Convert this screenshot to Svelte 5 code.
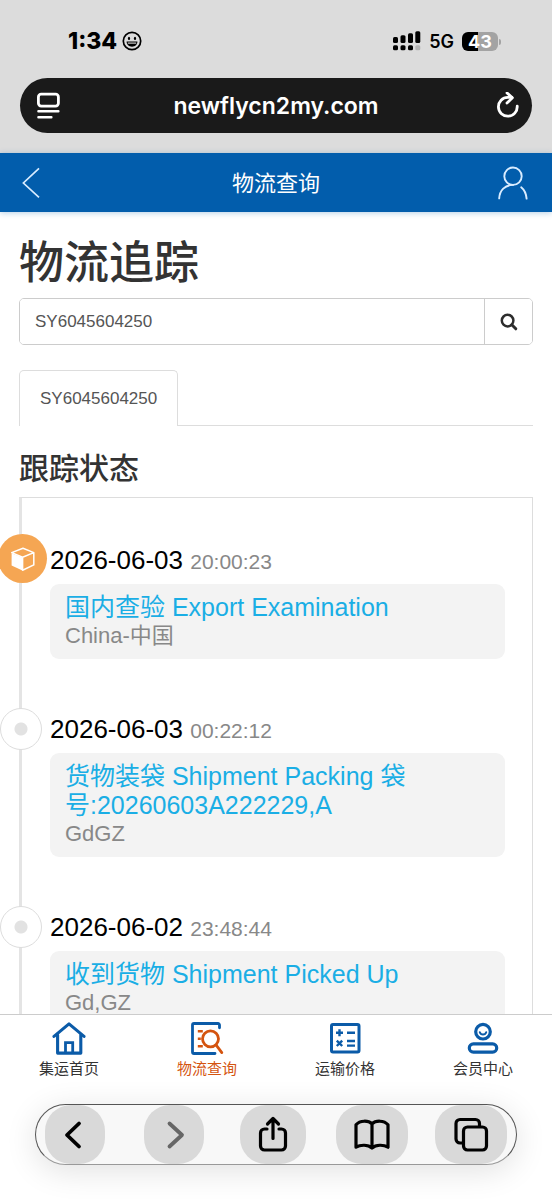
<script>
  let query = $state('SY6045604250');

  const events = [
    { date: '2026-06-03', time: '20:00:23', title: '国内查验 Export Examination', place: 'China-中国' },
    { date: '2026-06-03', time: '00:22:12', title: '货物装袋 Shipment Packing 袋号:20260603A222229,A', place: 'GdGZ' },
    { date: '2026-06-02', time: '23:48:44', title: '收到货物 Shipment Picked Up', place: 'Gd,GZ' }
  ];
</script>

<div class="screen">
  <div class="browser-top">
    <div class="status">
      <div class="clock">
        <span>1:34</span>
        <svg width="20" height="20" viewBox="0 0 20 20" fill="none" stroke="#000" aria-hidden="true">
          <circle cx="10" cy="10" r="8.7" stroke-width="1.7" />
          <ellipse cx="7" cy="7.4" rx="1.1" ry="1.6" fill="#000" stroke="none" />
          <ellipse cx="13" cy="7.4" rx="1.1" ry="1.6" fill="#000" stroke="none" />
          <path d="M4.6 10.6h10.8c0 3.2-2.4 5.2-5.4 5.2s-5.4-2-5.4-5.2z" fill="#000" stroke="none" />
          <path d="M5.8 12.1h8.4" stroke="#ddd" stroke-width="1.1" />
        </svg>
      </div>
      <div class="signals">
        <svg width="29" height="20" viewBox="0 0 29 20" aria-hidden="true">
          <rect x="1" y="6" width="5" height="6" rx="1.5" />
          <rect x="8.5" y="4.3" width="5" height="7.7" rx="1.5" />
          <rect x="16" y="2.3" width="5" height="9.7" rx="1.5" />
          <rect x="23.3" y="0.3" width="5" height="11.7" rx="1.5" />
          <rect x="1" y="14.3" width="5" height="5" rx="1.5" />
          <rect x="8.5" y="14.3" width="5" height="5" rx="1.5" />
          <rect x="16" y="14.3" width="5" height="5" rx="1.5" />
          <rect x="23.3" y="14.3" width="5" height="5" rx="1.5" fill="#b5b5b5" />
        </svg>
        <span class="network">5G</span>
        <span class="battery">43</span>
      </div>
    </div>
    <div class="address">
      <button class="plain" aria-label="Page menu">
        <svg width="28" height="28" viewBox="0 0 28 28" fill="none" stroke="#fff" stroke-width="2.8" stroke-linecap="round" aria-hidden="true">
          <rect x="4.4" y="2.1" width="20" height="12" rx="2.8" />
          <path d="M4.4 19.3h20M4.4 25.2h13" stroke-width="2.4" />
        </svg>
      </button>
      <span class="host">newflycn2my.com</span>
      <button class="plain" aria-label="Reload">
        <svg width="28" height="28" viewBox="0 0 28 28" fill="none" stroke="#fff" stroke-width="2.8" stroke-linecap="round" stroke-linejoin="round" aria-hidden="true">
          <path d="M23.2 14.2A9.4 9.4 0 1 1 13.8 5.4h4" />
          <path d="M13 0.9l5.4 4.9-5.4 5.3" />
        </svg>
      </button>
    </div>
  </div>

  <header>
    <a href="#back" class="back" aria-label="返回">
      <svg width="34" height="34" viewBox="0 0 34 34" fill="none" stroke="#d9ecff" stroke-width="1.7" aria-hidden="true">
        <path d="M23 2.4L7.4 17 23 31.4" />
      </svg>
    </a>
    <span class="page-name">物流查询</span>
    <a href="#account" aria-label="账户">
      <svg width="34" height="34" viewBox="0 0 34 34" fill="none" stroke="#d9ecff" stroke-width="1.9" stroke-linecap="round" aria-hidden="true">
        <circle cx="17" cy="10.2" r="8.7" />
        <path d="M3.2 32.4C3.6 24.4 9 19 17 18.9M25.2 21.3c3.2 2.6 5 6.6 5.4 11.3" />
      </svg>
    </a>
  </header>

  <main>
    <h1>物流追踪</h1>
    <form class="search" onsubmit={(e) => e.preventDefault()}>
      <input type="text" aria-label="单号" bind:value={query} />
      <button aria-label="搜索">
        <svg width="18" height="18" viewBox="0 0 18 18" fill="none" stroke="#2d2d2d" aria-hidden="true">
          <circle cx="7.6" cy="7.6" r="5.8" stroke-width="2.5" />
          <path d="M11.8 11.8l4 4" stroke-width="3" stroke-linecap="round" />
        </svg>
      </button>
    </form>

    <div class="tabs">
      <a href="#parcel" class="tab">SY6045604250</a>
    </div>

    <h2>跟踪状态</h2>
    <ol class="timeline">
      {#each events as event, i}
        <li>
          {#if i === 0}
            <span class="marker current">
              <svg width="26" height="26" viewBox="0 0 26 26" aria-hidden="true">
                <path d="M1.6 7.3L12.4 11.4V24.4L1.6 19.4z" fill="#fff" />
                <path d="M1.7 6.600L13 2.300l10.800 4.300v12.300L12.600 24.200V11.200zM12.600 11.200L23.800 6.600M1.700 6.600l10.900 4.600" fill="none" stroke="#fff" stroke-width="1.500" stroke-linejoin="round" />
              </svg>
            </span>
          {:else}
            <span class="marker past"></span>
          {/if}
          <div class="when"><time>{event.date}</time> <small>{event.time}</small></div>
          <div class="card">
            <p class="title">{event.title}</p>
            <p class="place">{event.place}</p>
          </div>
        </li>
      {/each}
    </ol>
  </main>

  <div class="bottom">
    <nav>
      <a href="#home">
        <svg width="34" height="34" viewBox="0 0 34 34" fill="none" stroke="#0b5ba8" stroke-width="3.1" stroke-linejoin="round" stroke-linecap="round" aria-hidden="true">
          <path d="M2 15.4L17 2.9l15 12.500" />
          <path d="M5.600 14v18.100h23.200V14" />
          <path d="M13.500 31.500V21.700h7.200v9.800" stroke-linejoin="miter" stroke-width="2.800" />
        </svg>
        集运首页
      </a>
      <a href="#track" class="active">
        <svg width="34" height="34" viewBox="0 0 34 34" fill="none" stroke="#0b5ba8" stroke-width="2.800" stroke-linecap="round" stroke-linejoin="round" aria-hidden="true">
          <path d="M29.500 6.800V4a1.500 1.500 0 0 0-1.500-1.500H4A1.500 1.500 0 0 0 2.500 4v27A1.500 1.500 0 0 0 4 32.500h21" />
          <g stroke="#d4540f">
            <circle cx="20.500" cy="17.800" r="8" />
            <path d="M26.200 24.200l5.600 7.400" />
            <path d="M7.800 10.300h5M7.800 17.800h3M7.800 25.300h5" stroke-width="2.400" stroke-linecap="butt" />
          </g>
        </svg>
        物流查询
      </a>
      <a href="#price">
        <svg width="34" height="34" viewBox="0 0 34 34" fill="none" stroke="#0b5ba8" stroke-width="3" aria-hidden="true">
          <rect x="3.500" y="3.500" width="27.500" height="27.500" rx="1.500" />
          <path d="M8 11.800h7M11.500 8.300v7M19 11.800h8M19 20h8M19 24.600h8M8.800 19.600l5.400 5.400M14.200 19.600l-5.400 5.400" stroke-width="2.400" />
        </svg>
        运输价格
      </a>
      <a href="#member">
        <svg width="34" height="34" viewBox="0 0 34 34" fill="none" stroke="#0b5ba8" stroke-width="3.200" stroke-linecap="round" aria-hidden="true">
          <circle cx="17" cy="10.700" r="7.300" />
          <path d="M13.800 11.300c1 3 5.400 3 6.400 0" stroke-width="2" />
          <rect x="3.300" y="22.900" width="27.400" height="8.200" rx="4.100" />
        </svg>
        会员中心
      </a>
    </nav>

    <div class="toolbar">
      <span><button aria-label="Back">
        <svg width="40" height="40" viewBox="0 0 40 40" fill="none" stroke="#000" stroke-width="3.800" stroke-linecap="round" stroke-linejoin="round" aria-hidden="true"><path d="M24 8.500L12 20l12 11.500" /></svg>
      </button></span>
      <span><button aria-label="Forward">
        <svg width="40" height="40" viewBox="0 0 40 40" fill="none" stroke="#666" stroke-width="3.800" stroke-linecap="round" stroke-linejoin="round" aria-hidden="true"><path d="M15.500 8.500L28 20 15.500 31.500" /></svg>
      </button></span>
      <span><button class="mid" aria-label="Share">
        <svg width="40" height="40" viewBox="0 0 40 40" fill="none" stroke="#000" stroke-width="3.200" stroke-linecap="round" stroke-linejoin="round" aria-hidden="true">
          <path d="M14 14h-2.500a4 4 0 0 0-4 4V31a4 4 0 0 0 4 4h17a4 4 0 0 0 4-4V18a4 4 0 0 0-4-4H26M20 23.500V4M14.500 9L20 3.500 25.500 9" />
        </svg>
      </button></span>
      <span><button class="wide" aria-label="Bookmarks">
        <svg width="40" height="40" viewBox="0 0 40 40" fill="none" stroke="#000" stroke-width="3.200" stroke-linecap="round" stroke-linejoin="round" aria-hidden="true">
          <path d="M20 8.800C16.500 5.400 8 5 4 9.800V32.200c4.500-2.700 12-2.700 16 .8 4-3.500 11.500-3.500 16-.8V9.800C32 5 23.500 5.400 20 8.800zM20 9v23.500" />
        </svg>
      </button></span>
      <span><button class="wide" aria-label="Tabs">
        <svg width="40" height="40" viewBox="0 0 40 40" fill="none" stroke="#000" stroke-width="3.200" stroke-linejoin="round" aria-hidden="true">
          <path d="M12 28H9a4 4 0 0 1-4-4V8.500a4 4 0 0 1 4-4h15.500a4 4 0 0 1 4 4V12" />
          <rect x="12.500" y="12" width="23" height="23" rx="4" />
        </svg>
      </button></span>
    </div>
  </div>
</div>

<style>
  :global(body) {
    background: #fff;
  }
  .screen,
  .screen * {
    box-sizing: border-box;
  }
  .screen {
    height: 100vh;
    display: flex;
    flex-direction: column;
    overflow: hidden;
    font-family: "Liberation Sans", "Noto Sans CJK SC", sans-serif;
    color: #333;
  }
  svg {
    display: block;
    flex: none;
  }
  a {
    color: inherit;
    text-decoration: none;
  }
  button {
    border: 0;
    padding: 0;
    font: inherit;
  }

  .browser-top {
    flex: none;
    background: #dcdcdc;
    padding: 26px 20px 20px;
    font-family: Inter, sans-serif;
  }
  .status {
    height: 30px;
    display: flex;
    align-items: center;
    justify-content: space-between;
    padding: 0 34px 0 48px;
    color: #000;
  }
  .clock {
    display: flex;
    align-items: center;
    gap: 5px;
    font-size: 23px;
    font-weight: 800;
  }
  .signals {
    display: flex;
    align-items: center;
    gap: 8px;
  }
  .network {
    font-size: 18px;
    font-weight: 600;
  }
  .battery {
    position: relative;
    width: 36px;
    height: 19px;
    border-radius: 6px;
    background: linear-gradient(90deg, #000 44%, #a3a3a3 44%);
    color: #fff;
    font-size: 18px;
    font-weight: 700;
    line-height: 19px;
    text-align: center;
  }
  .battery::after {
    content: "";
    position: absolute;
    right: -3px;
    top: 7px;
    width: 2px;
    height: 6px;
    border-radius: 0 2px 2px 0;
    background: #a3a3a3;
  }
  .address {
    height: 55px;
    margin-top: 22px;
    padding: 0 10px 0 14px;
    display: flex;
    align-items: center;
    border-radius: 28px;
    background: #1a1a1a;
  }
  .plain {
    background: none;
  }
  .host {
    flex: 1;
    padding-right: 4px;
    color: #fff;
    font-size: 23px;
    font-weight: 600;
    text-align: center;
  }

  header {
    flex: none;
    position: relative;
    height: 59px;
    padding: 0 22px 0 16px;
    display: flex;
    align-items: center;
    justify-content: space-between;
    background: #025dac;
    color: #fff;
    box-shadow: 0 1px 6px rgba(2, 93, 172, 0.3);
  }
  .back {
    width: 40px;
  }
  .page-name {
    padding-bottom: 4px;
    font-family: "Noto Sans CJK SC", sans-serif;
    font-size: 22px;
  }

  main {
    flex: 1;
    min-height: 0;
    overflow: hidden;
    padding: 23px 19px 0;
  }
  h1,
  h2 {
    margin: 0;
    font-family: "Noto Sans CJK SC", sans-serif;
    font-weight: 500;
  }
  h1 {
    font-size: 45px;
    line-height: 50px;
  }
  .search {
    display: flex;
    height: 47px;
    margin-top: 13px;
    border: 1px solid #ccc;
    border-radius: 5px;
    overflow: hidden;
  }
  .search input {
    flex: 1;
    min-width: 0;
    border: 0;
    outline: 0;
    padding: 0 15px;
    background: #fff;
    color: #555;
    font: inherit;
    font-size: 17px;
  }
  .search button {
    width: 48px;
    display: grid;
    place-items: center;
    border-left: 1px solid #ccc;
    background: #fff;
  }
  .tabs {
    display: flex;
    margin-top: 25px;
    border-bottom: 1px solid #ddd;
  }
  .tab {
    height: 56px;
    margin-bottom: -1px;
    padding: 0 20px;
    border: 1px solid #ddd;
    border-bottom: 0;
    border-radius: 5px 5px 0 0;
    background: #fff;
    color: #555;
    font-size: 17px;
    line-height: 56px;
  }
  h2 {
    margin: 24px 0 15px;
    font-size: 30px;
    line-height: 32px;
  }

  .timeline {
    list-style: none;
    margin: 0;
    padding: 47px 27px 47px 28px;
    border: 1px solid #ddd;
    border-left: 3px solid #e4e4e4;
  }
  li {
    position: relative;
  }
  li + li {
    margin-top: 55px;
  }
  .marker {
    position: absolute;
    border-radius: 50%;
  }
  .current {
    left: -52px;
    top: -11px;
    width: 49px;
    height: 49px;
    display: grid;
    place-items: center;
    background: #f5a653;
  }
  .past {
    left: -50px;
    top: -6px;
    width: 42px;
    height: 42px;
    border: 1px solid #ddd;
    background: radial-gradient(circle, #e2e2e2 6px, #fff 7px);
  }
  .when {
    color: #000;
    font-size: 26px;
    line-height: 30px;
  }
  small {
    color: #888;
    font-size: 21px;
    line-height: 20px;
  }
  .card {
    margin-top: 9px;
    padding: 9px 15px;
    border-radius: 9px;
    background: #f3f3f3;
  }
  p {
    margin: 0;
  }
  .title {
    color: #1aaee5;
    font-size: 25px;
    line-height: 29px;
  }
  .place {
    color: #888;
    font-size: 22px;
    line-height: 28px;
  }

  .bottom {
    flex: none;
    position: relative;
    border-top: 1px solid #ccc;
    background: #fff;
    padding-bottom: 35px;
  }
  nav {
    display: grid;
    grid-template-columns: repeat(4, 1fr);
    padding-top: 6px;
    font-family: "Noto Sans CJK SC", sans-serif;
    font-size: 15px;
    line-height: 22px;
  }
  nav a {
    display: flex;
    flex-direction: column;
    align-items: center;
    gap: 2px;
  }
  nav .active {
    color: #d4540f;
  }
  .toolbar {
    height: 61px;
    margin: 25px 35px 0;
    padding: 0 9px 0 3px;
    display: flex;
    justify-content: space-between;
    border: 1px solid #555;
    border-bottom-color: #999;
    border-radius: 31px;
    background: #f8f8f8;
    box-shadow: 0 6px 32px rgba(0, 0, 0, 0.12);
  }
  .toolbar span {
    width: 72px;
    display: flex;
    justify-content: center;
  }
  .toolbar button {
    width: 60px;
    display: grid;
    place-items: center;
    border-radius: 26px;
    background: #d9d9d9;
  }
  .toolbar .mid {
    width: 66px;
  }
  .toolbar .wide {
    width: 72px;
  }
</style>
